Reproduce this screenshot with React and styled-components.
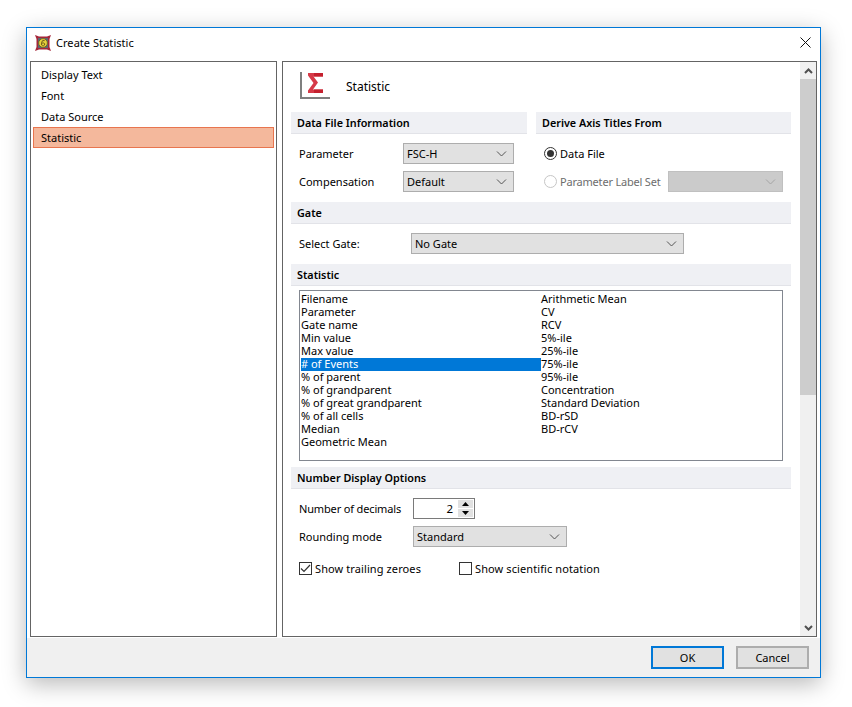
import React from 'react';
import styled, { createGlobalStyle } from 'styled-components';

const Global = createGlobalStyle`
  html, body { margin: 0; padding: 0; background: #fff; }
  body { font-family: "Noto Sans", "Open Sans", sans-serif; font-size: 11px; color: #000; }
  * { box-sizing: border-box; }
`;
const Page = styled.div`
  width: 852px; height: 707px; padding: 27px 31px 29px 26px; overflow: hidden;
`;
const Dialog = styled.div`
  width: 795px; height: 651px; display: flex; flex-direction: column;
  background: #f0f0f0; border: 1px solid #0078d7;
  box-shadow: 0 6px 22px rgba(0,0,0,.28);
`;
const TitleBar = styled.div`
  height: 33px; flex: none; background: #fff; display: flex; align-items: center;
  padding: 0 9px 4px 8px; gap: 5px;
`;
const TitleText = styled.span` flex: 1; font-size: 11px; letter-spacing: .05px; line-height: 16px; `;
const Main = styled.div`
  height: 577px; flex: none; background: #fff; display: flex; gap: 5px; padding: 0 3px 0 3px;
`;
const Pane = styled.div`
  border: 1px solid #646464; background: #fff; height: 576px; flex: none;
`;
const NavPane = styled(Pane)` width: 247px; padding: 2px; `;
const NavItem = styled.div`
  height: 21px; line-height: 19px; padding-left: 7px;
  border: 1px solid ${p => (p.$selected ? '#e8754f' : 'transparent')};
  background: ${p => (p.$selected ? '#f4b89c' : 'transparent')};
`;
const ContentPane = styled(Pane)` width: 535px; display: flex; `;
const Content = styled.div` width: 517px; padding: 0 9px 0 8px; flex: none; `;
const PageHead = styled.div`
  height: 50px; display: flex; align-items: flex-start; padding: 8px 0 0 8px; gap: 16px;
`;
const PageTitle = styled.span` font-size: 12px; line-height: 34px; `;
const Columns = styled.div` display: flex; gap: 9px; `;
const Column = styled.div` width: ${p => p.$w}px; `;
const SectionHead = styled.div`
  height: 22px; line-height: 21px; padding-left: 6px;
  font-weight: 600; font-size: 10.8px; margin-top: ${p => p.$top || 0}px;
  background: #eff0f4; border-bottom: 1px solid #e2e3e8;
`;
const Row = styled.div`
  display: flex; align-items: center; height: 21px; padding-left: 8px; margin-top: ${p => p.$top}px;
`;
const RowLabel = styled.span`
  width: ${p => p.$w}px; flex: none; white-space: nowrap; letter-spacing: ${p => p.$track || 0}px;
`;
const SelectBox = styled.div`
  width: ${p => p.$w}px; height: 21px; flex: none; display: flex; align-items: center;
  justify-content: space-between; padding: 0 6px 0 3px;
  background: ${p => (p.$disabled ? '#cbcbcb' : '#e1e1e1')};
  border: 1px solid ${p => (p.$disabled ? '#c0c0c0' : '#adadad')};
  color: #000;
`;
const RadioRow = styled.div`
  display: flex; align-items: center; height: 21px; padding-left: 8px; gap: 3px;
  margin-top: ${p => p.$top}px; color: ${p => (p.$disabled ? '#6d6d6d' : '#000')};
`;
const Radio = styled.span`
  width: 13px; height: 13px; border-radius: 50%; flex: none; display: flex;
  align-items: center; justify-content: center; background: #fff;
  border: 1px solid ${p => (p.$disabled ? '#c6c6c6' : '#333')};
`;
const RadioDot = styled.span` width: 7px; height: 7px; border-radius: 50%; background: #333; `;
const RadioLabel = styled.span` width: 105px; flex: none; white-space: nowrap; letter-spacing: -.2px; `;
const ListBox = styled.div`
  width: 484px; height: 171px; margin: 4px 0 6px 8px; padding: 2px 1px 0 1px;
  border: 1px solid #828790; display: grid; grid-template-columns: 240px 1fr;
  grid-auto-flow: column; grid-template-rows: repeat(12, 13px); background: #fff;
`;
const ListItem = styled.div`
  height: 13px; line-height: 11px; white-space: nowrap;
  background: ${p => (p.$selected ? '#0078d7' : 'transparent')};
  color: ${p => (p.$selected ? '#fff' : '#000')};
`;
const Spinner = styled.div`
  width: 62px; height: 21px; flex: none; display: flex; align-items: center;
  justify-content: space-between; background: #fff; border: 1px solid #7a7a7a;
  padding: 1px 1px 1px 0;
`;
const SpinValue = styled.span` flex: 1; text-align: right; padding-right: 5px; font-size: 11.5px; `;
const SpinButtons = styled.div` width: 15px; height: 17px; display: flex; flex-direction: column; gap: 1px; `;
const SpinButton = styled.div`
  flex: 1; background: #e1e1e1; display: flex; align-items: center; justify-content: center;
`;
const CheckRow = styled.div`
  display: flex; align-items: center; height: 14px; padding-left: 8px; margin-top: 14px;
`;
const CheckItem = styled.div`
  display: flex; align-items: center; gap: 3px; width: ${p => p.$w}px; letter-spacing: .1px; white-space: nowrap;
`;
const CheckBox = styled.span`
  width: 13px; height: 13px; flex: none; border: 1px solid #333; background: #fff;
  display: flex; align-items: center; justify-content: center;
`;
const ScrollBar = styled.div`
  width: 16px; flex: none; background: #f0f0f0; display: flex; flex-direction: column;
`;
const ScrollArrow = styled.div`
  height: 17px; flex: none; display: flex; align-items: center; justify-content: center;
`;
const ScrollThumb = styled.div` height: 316px; flex: none; background: #cdcdcd; `;
const ScrollTrack = styled.div` flex: 1; `;
const Footer = styled.div`
  flex: 1; display: flex; justify-content: flex-end; align-items: flex-start;
  padding: 8px 11px 0 0; gap: 12px; background: #f0f0f0;
`;
const Button = styled.div`
  width: 73px; height: 23px; display: flex; align-items: center; justify-content: center;
  background: #e1e1e1; border: 2px solid ${p => (p.$primary ? '#0078d7' : '#adadad')};
`;
const IconSlot = styled.svg` display: block; flex: none; `;

const Chevron = ({ color = '#555' }) => (
  <IconSlot width="11" height="6" viewBox="0 0 11 6">
    <path d="M1 .5 5.5 5 10 .5" fill="none" stroke={color} strokeWidth="1" />
  </IconSlot>
);
const Select = ({ w, children, disabled }) => (
  <SelectBox $w={w} $disabled={disabled}>
    <span>{children}</span>
    <Chevron color={disabled ? '#a4a4a4' : '#555'} />
  </SelectBox>
);
const Arrow = ({ down }) => (
  <IconSlot width="9" height="6" viewBox="0 0 9 6">
    <path d={down ? 'M1 1 4.5 4.5 8 1' : 'M1 5 4.5 1.5 8 5'} fill="none" stroke="#505050" strokeWidth="2" />
  </IconSlot>
);
const SpinArrow = ({ down }) => (
  <IconSlot width="7" height="4" viewBox="0 0 7 4">
    <path d={down ? 'M0 0h7L3.5 4z' : 'M0 4h7L3.5 0z'} fill="#000" />
  </IconSlot>
);
const AppIcon = () => (
  <IconSlot width="16" height="16" viewBox="0 0 16 16">
    <path d="M0 0 4 1.5h8L16 0 14.5 4v8L16 16l-4-1.5H4L0 16l1.5-4V4z" fill="#a5263a" />
    <rect x="3" y="3" width="10" height="10" fill="#5a6a72" />
    <circle cx="8" cy="8" r="4.4" fill="#e6d23c" stroke="#6e5a1c" strokeWidth=".8" />
    <path d="M9.6 5.6H7.6L6.6 7.5V10l1 .7h1l1-.7V8.6l-1-.6H6.8" fill="none" stroke="#6e5a1c" strokeWidth="1" />
  </IconSlot>
);
const CloseIcon = () => (
  <IconSlot width="11" height="11" viewBox="0 0 11 11">
    <path d="M.5.5l10 10M10.5.5l-10 10" stroke="#111" strokeWidth="1" fill="none" />
  </IconSlot>
);
const StatIcon = () => (
  <IconSlot width="31" height="29" viewBox="0 0 31 29">
    <path d="M2 2v26h29" fill="none" stroke="#7f7f7f" strokeWidth="2" />
    <path d="M9 3h15v3.5H14.5L19 12.5 14 19.5h10V23H9v-2.5L14.5 13 9 5.5z" fill="#d63a48" />
    <path d="M15 3h9v3.5h-9zM15 19.5h9V23h-9z" fill="#c4202e" />
  </IconSlot>
);

const leftStats = ['Filename', 'Parameter', 'Gate name', 'Min value', 'Max value', '# of Events', '% of parent', '% of grandparent', '% of great grandparent', '% of all cells', 'Median', 'Geometric Mean'];
const rightStats = ['Arithmetic Mean', 'CV', 'RCV', '5%-ile', '25%-ile', '75%-ile', '95%-ile', 'Concentration', 'Standard Deviation', 'BD-rSD', 'BD-rCV'];

export default function App() {
  return (
    <Page>
      <Global />
      <Dialog>
        <TitleBar>
          <AppIcon />
          <TitleText>Create Statistic</TitleText>
          <CloseIcon />
        </TitleBar>
        <Main>
          <NavPane>
            <NavItem>Display Text</NavItem>
            <NavItem>Font</NavItem>
            <NavItem>Data Source</NavItem>
            <NavItem $selected>Statistic</NavItem>
          </NavPane>
          <ContentPane>
            <Content>
              <PageHead>
                <StatIcon />
                <PageTitle>Statistic</PageTitle>
              </PageHead>
              <Columns>
                <Column $w={236}>
                  <SectionHead>Data File Information</SectionHead>
                  <Row $top={9}><RowLabel $w={104}>Parameter</RowLabel><Select w={111}>FSC-H</Select></Row>
                  <Row $top={7}><RowLabel $w={104}>Compensation</RowLabel><Select w={111}>Default</Select></Row>
                </Column>
                <Column $w={255}>
                  <SectionHead>Derive Axis Titles From</SectionHead>
                  <RadioRow $top={9}><Radio><RadioDot /></Radio><span>Data File</span></RadioRow>
                  <RadioRow $top={7} $disabled><Radio $disabled /><RadioLabel>Parameter Label Set</RadioLabel><Select w={115} disabled /></RadioRow>
                </Column>
              </Columns>
              <SectionHead $top={10}>Gate</SectionHead>
              <Row $top={9}><RowLabel $w={112}>Select Gate:</RowLabel><Select w={273}>No Gate</Select></Row>
              <SectionHead $top={10}>Statistic</SectionHead>
              <ListBox>
                {leftStats.map(s => <ListItem key={s} $selected={s === '# of Events'}>{s}</ListItem>)}
                {rightStats.map(s => <ListItem key={s}>{s}</ListItem>)}
              </ListBox>
              <SectionHead>Number Display Options</SectionHead>
              <Row $top={9}>
                <RowLabel $w={114} $track={-0.15}>Number of decimals</RowLabel>
                <Spinner>
                  <SpinValue>2</SpinValue>
                  <SpinButtons>
                    <SpinButton><SpinArrow /></SpinButton>
                    <SpinButton><SpinArrow down /></SpinButton>
                  </SpinButtons>
                </Spinner>
              </Row>
              <Row $top={7}><RowLabel $w={114}>Rounding mode</RowLabel><Select w={154}>Standard</Select></Row>
              <CheckRow>
                <CheckItem $w={160}>
                  <CheckBox>
                    <IconSlot width="11" height="9" viewBox="0 0 11 9"><path d="M1 4.5 4 7.5 10 1" fill="none" stroke="#333" strokeWidth="1.2" /></IconSlot>
                  </CheckBox>
                  <span>Show trailing zeroes</span>
                </CheckItem>
                <CheckItem>
                  <CheckBox />
                  <span>Show scientific notation</span>
                </CheckItem>
              </CheckRow>
            </Content>
            <ScrollBar>
              <ScrollArrow><Arrow /></ScrollArrow>
              <ScrollThumb />
              <ScrollTrack />
              <ScrollArrow><Arrow down /></ScrollArrow>
            </ScrollBar>
          </ContentPane>
        </Main>
        <Footer>
          <Button $primary>OK</Button>
          <Button>Cancel</Button>
        </Footer>
      </Dialog>
    </Page>
  );
}
